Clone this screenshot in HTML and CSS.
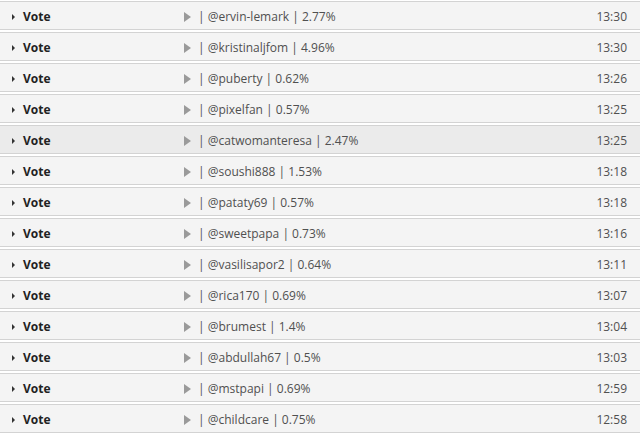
FILE: index.html
```html
<!DOCTYPE html>
<html>
<head>
<meta charset="utf-8">
<link rel="stylesheet" href="styles.css">
</head>
<body>
<div class="list">
  <div class="row"><span class="caret"></span><span class="label">Vote</span><span class="play"></span><span class="info">| @ervin-lemark | 2.77%</span><span class="time">13:30</span></div>
  <div class="row"><span class="caret"></span><span class="label">Vote</span><span class="play"></span><span class="info">| @kristinaljfom | 4.96%</span><span class="time">13:30</span></div>
  <div class="row"><span class="caret"></span><span class="label">Vote</span><span class="play"></span><span class="info">| @puberty | 0.62%</span><span class="time">13:26</span></div>
  <div class="row"><span class="caret"></span><span class="label">Vote</span><span class="play"></span><span class="info">| @pixelfan | 0.57%</span><span class="time">13:25</span></div>
  <div class="row hover"><span class="caret"></span><span class="label">Vote</span><span class="play"></span><span class="info">| @catwomanteresa | 2.47%</span><span class="time">13:25</span></div>
  <div class="row"><span class="caret"></span><span class="label">Vote</span><span class="play"></span><span class="info">| @soushi888 | 1.53%</span><span class="time">13:18</span></div>
  <div class="row"><span class="caret"></span><span class="label">Vote</span><span class="play"></span><span class="info">| @pataty69 | 0.57%</span><span class="time">13:18</span></div>
  <div class="row"><span class="caret"></span><span class="label">Vote</span><span class="play"></span><span class="info">| @sweetpapa | 0.73%</span><span class="time">13:16</span></div>
  <div class="row"><span class="caret"></span><span class="label">Vote</span><span class="play"></span><span class="info">| @vasilisapor2 | 0.64%</span><span class="time">13:11</span></div>
  <div class="row"><span class="caret"></span><span class="label">Vote</span><span class="play"></span><span class="info">| @rica170 | 0.69%</span><span class="time">13:07</span></div>
  <div class="row"><span class="caret"></span><span class="label">Vote</span><span class="play"></span><span class="info">| @brumest | 1.4%</span><span class="time">13:04</span></div>
  <div class="row"><span class="caret"></span><span class="label">Vote</span><span class="play"></span><span class="info">| @abdullah67 | 0.5%</span><span class="time">13:03</span></div>
  <div class="row"><span class="caret"></span><span class="label">Vote</span><span class="play"></span><span class="info">| @mstpapi | 0.69%</span><span class="time">12:59</span></div>
  <div class="row"><span class="caret"></span><span class="label">Vote</span><span class="play"></span><span class="info">| @childcare | 0.75%</span><span class="time">12:58</span></div>
</div>
</body>
</html>
```
FILE: styles.css
```css
html, body {
  margin: 0;
  padding: 0;
  background: #ffffff;
}
body {
  font-family: "Open Sans", "Liberation Sans", sans-serif;
  font-size: 12px;
  color: #555555;
}
.list {
  display: flex;
  flex-direction: column;
  gap: 2px;
  padding-top: 1px;
}
.row {
  display: flex;
  align-items: center;
  height: 25px;
  box-sizing: content-box;
  border-top: 1px solid #d3d3d3;
  border-bottom: 1px solid #d3d3d3;
  background: #f4f4f4;
  padding: 2px 13px 0 12px;
}
.row.hover {
  background: #ebebeb;
}
.caret {
  width: 0;
  height: 0;
  border-top: 3px solid transparent;
  border-bottom: 3px solid transparent;
  border-left: 3px solid #333333;
  margin-right: 8px;
}
.label {
  font-weight: 700;
  color: #222222;
  width: 161px;
}
.play {
  width: 0;
  height: 0;
  border-top: 5px solid transparent;
  border-bottom: 5px solid transparent;
  border-left: 7px solid #9a9a9a;
  margin-right: 7px;
}
.info {
  flex: 1;
  color: #505050;
}
.time {
  color: #505050;
}
```
